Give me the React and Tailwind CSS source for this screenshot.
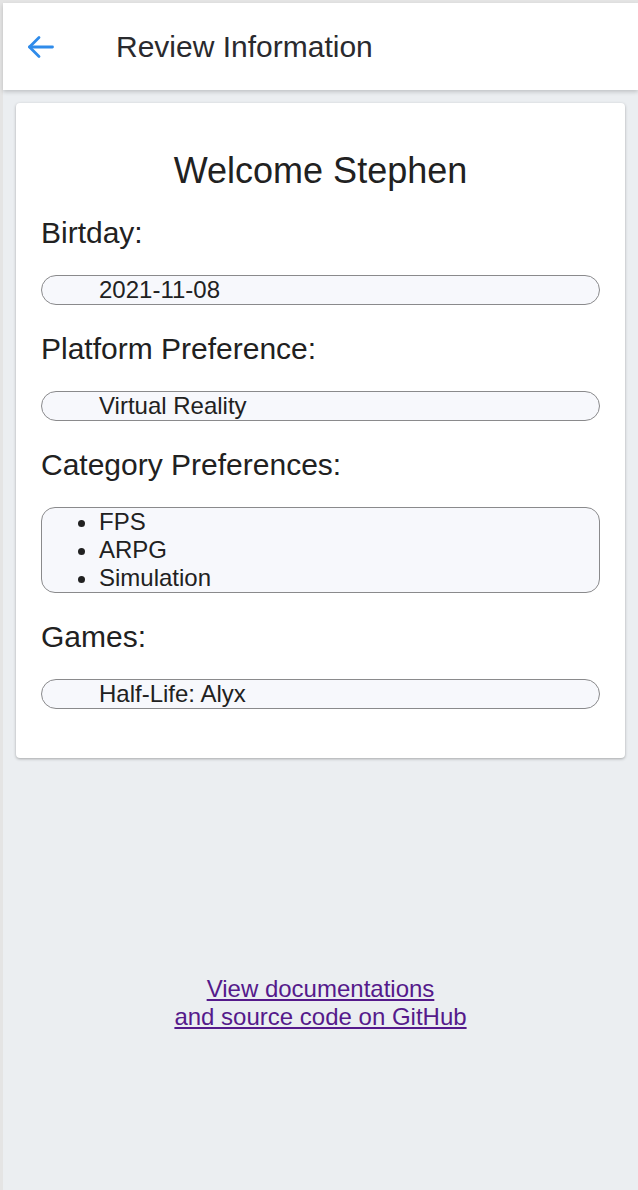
const categories = ["FPS", "ARPG", "Simulation"];

function BackArrow() {
  return (
    <svg width="28" height="24" viewBox="0 0 28 24" fill="none" stroke="#2f8bea" strokeWidth="2.8" strokeLinecap="round" strokeLinejoin="round">
      <path d="M2.5 12H25.5" />
      <path d="M12 2.5L2.5 12L12 21.5" />
    </svg>
  );
}

function Label({ children, first }) {
  return (
    <h3 className={`${first ? "mt-[25px]" : "mt-[27px]"} mb-[25px] h-[34px] text-[30px] leading-[34px] font-normal text-[#212121]`}>
      {children}
    </h3>
  );
}

function Pill({ children }) {
  return (
    <div className="h-[30px] rounded-full border border-[#8a8a8c] bg-[#f7f8fc] pl-[57px] text-[24px] leading-[28px] text-[#212121]">
      {children}
    </div>
  );
}

export default function App() {
  return (
    <div className="min-h-[1190px] border-t-[3px] border-l-[3px] border-[#e4e4e4] bg-[#ebeef1] font-['Liberation_Sans',Arial,sans-serif]">
      <header className="flex h-[87px] items-center bg-white pl-[24px] shadow-[0_2px_4px_rgba(0,0,0,0.18)]">
        <BackArrow />
        <h1 className="ml-[61px] text-[30px] font-normal text-[#2a2a2e]">Review Information</h1>
      </header>

      <main className="mx-[13px] mt-[13px] rounded-sm bg-white px-[25px] pt-[48px] pb-[49px] shadow-[0_1px_3px_rgba(0,0,0,0.3)]">
        <h2 className="h-[40px] text-center text-[36px] leading-[40px] font-normal text-[#212121]">Welcome Stephen</h2>

        <Label first>Birtday:</Label>
        <Pill>2021-11-08</Pill>

        <Label>Platform Preference:</Label>
        <Pill>Virtual Reality</Pill>

        <Label>Category Preferences:</Label>
        <ul className="list-disc rounded-[14px] border border-[#8a8a8c] bg-[#f7f8fc] pl-[57px] text-[24px] leading-[28px] text-[#212121]">
          {categories.map((c) => (
            <li key={c}>{c}</li>
          ))}
        </ul>

        <Label>Games:</Label>
        <Pill>Half-Life: Alyx</Pill>
      </main>

      <footer className="mt-[217px] text-center text-[24px] leading-[28px]">
        <a href="#" className="text-[#551a8b] underline">
          View documentations
          <br />
          and source code on GitHub
        </a>
      </footer>
    </div>
  );
}
